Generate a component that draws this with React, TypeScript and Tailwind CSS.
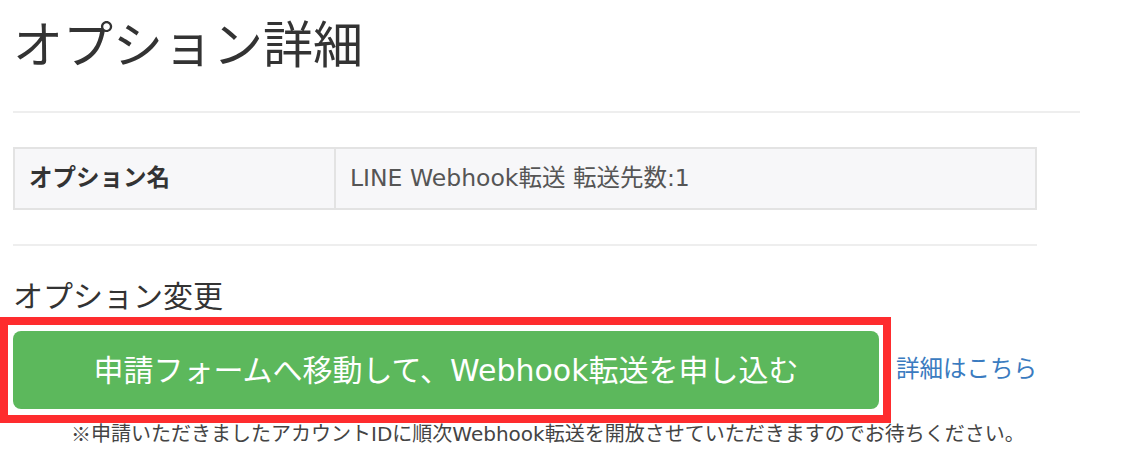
import React from 'react';

const font = "font-['DejaVu_Sans','Noto_Sans_CJK_JP',sans-serif]";

function OptionTable() {
  return (
    <div className="ml-[13px] mt-[34px] flex h-[63px] w-[1024px] border-2 border-[#e3e3e3] bg-[#f7f7f9]">
      <div className="flex w-[321px] items-center border-r-2 border-[#e3e3e3] pl-[14px] text-[23.5px] font-bold text-[#333]">
        オプション名
      </div>
      <div className="flex flex-1 items-center pl-[14px] text-[23.5px] text-[#555]">
        LINE Webhook転送 転送先数:1
      </div>
    </div>
  );
}

function ApplyRow() {
  return (
    <div className="flex items-center">
      {/* red frame drawn around the button in the screenshot */}
      <div className="border-[8px] border-[#fe2c2e] bg-white pt-[6px] pr-[4px] pb-[6px] pl-[5px]">
        <button className="flex h-[78px] w-[866px] items-center justify-center rounded-[8px] bg-[#5cb85c] text-[30px] text-white">
          申請フォームへ移動して、Webhook転送を申し込む
        </button>
      </div>
      <a className="ml-[5px] text-[23.5px] text-[#3a7bc0]">詳細はこちら</a>
    </div>
  );
}

export default function App() {
  return (
    <div className={`h-[452px] w-[1134px] overflow-hidden bg-white ${font}`}>
      <div className="flex h-[92px] items-center pl-[13px] text-[50px] leading-none text-[#333]">
        オプション詳細
      </div>
      <div className="ml-[13px] mt-[19px] h-[2px] w-[1067px] bg-[#eeeeee]" />
      <OptionTable />
      <div className="ml-[13px] mt-[34px] h-[2px] w-[1024px] bg-[#eeeeee]" />
      <div className="mt-[31px] flex h-[40px] items-center pl-[13px] text-[30px] leading-none text-[#333]">
        オプション変更
      </div>
      <ApplyRow />
      <div className="flex h-[22px] items-center pl-[71px] text-[20px] leading-none text-[#444]">
        <span className="font-['Noto_Sans_CJK_JP',sans-serif]">※</span>
        申請いただきましたアカウントIDに順次Webhook転送を開放させていただきますのでお待ちください。
      </div>
    </div>
  );
}
